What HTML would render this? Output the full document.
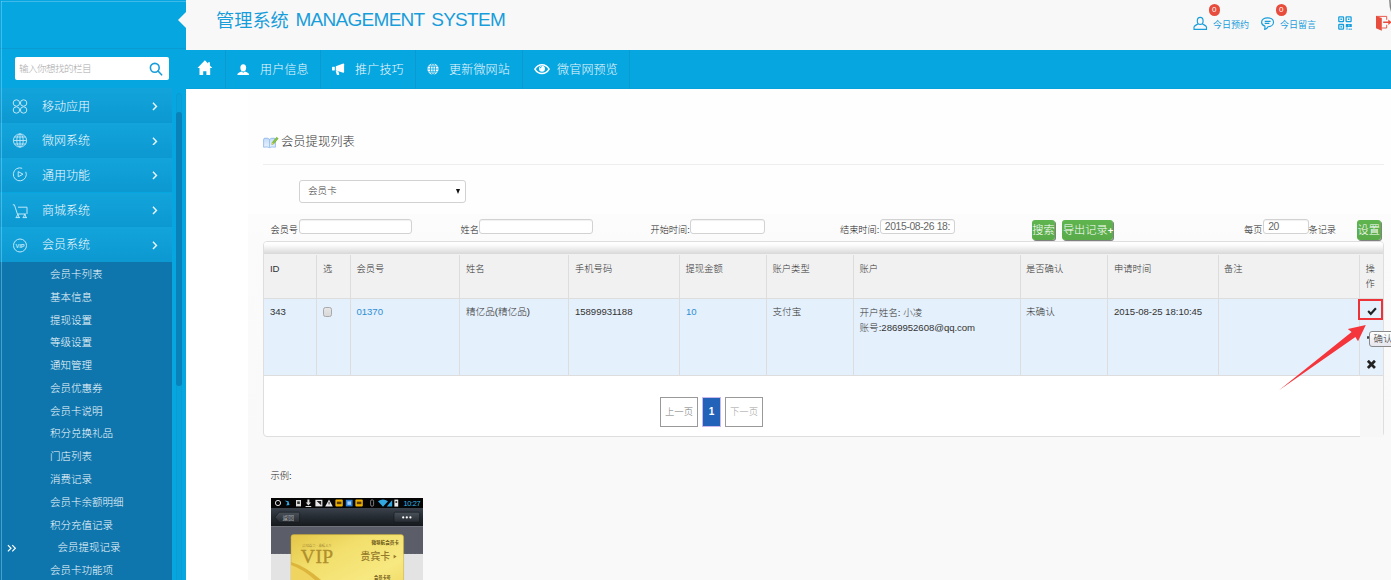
<!DOCTYPE html>
<html lang="zh-CN">
<head>
<meta charset="utf-8">
<title>管理系统 MANAGEMENT SYSTEM</title>
<style>
*{box-sizing:border-box;}
html,body{margin:0;padding:0;}
body{width:1391px;height:580px;overflow:hidden;position:relative;background:#fff;
  font-family:"Liberation Sans","Noto Sans CJK SC",sans-serif;font-size:9.6px;color:#333;font-weight:300;}
.abs{position:absolute;}
/* ---------- sidebar ---------- */
#side{position:absolute;left:0;top:0;width:186px;height:580px;background:#06a6e0;overflow:hidden;}
#side .edge{position:absolute;left:1px;top:1px;width:1px;height:579px;background:rgba(140,215,245,0.45);z-index:5;}
#side .edget{position:absolute;left:1px;top:1px;width:185px;height:1px;background:#41b9e8;}
#side .sep{position:absolute;left:0;top:48px;width:186px;height:1px;background:#0a9bd2;}
#search{position:absolute;left:15px;top:57px;width:154px;height:23px;background:#fff;border-radius:2px;}
#search span{position:absolute;left:4px;top:0;line-height:23px;font-size:9.6px;color:#a9a9a9;letter-spacing:-0.6px;}
#search svg{position:absolute;left:134px;top:5px;}
.mi{position:absolute;left:0;width:172px;height:34.7px;background:linear-gradient(#13a4dc,#0c98d0);color:#f4fbfe;font-size:12px;font-weight:300;}
.mi .t{position:absolute;left:42px;top:1.3px;line-height:34.7px;letter-spacing:0px;}
.mi svg.ic{position:absolute;left:12.2px;top:10.4px;}
.mi svg.ch{position:absolute;left:152px;top:13.6px;}
#sub{position:absolute;left:0;top:262px;width:172px;height:318px;background:#0f76ad;color:#f4fbfe;font-size:10.5px;font-weight:300;}
#sub div{position:absolute;left:50px;white-space:nowrap;line-height:14px;}
#track{position:absolute;left:176px;top:93px;width:6px;height:490px;border-radius:3px;background:#09a3dc;border:1px solid #0a9cd4;}
#thumb{position:absolute;left:176px;top:112px;width:6px;height:274px;border-radius:3px;background:#0882b9;}
/* ---------- header ---------- */
#head{position:absolute;left:186px;top:0;width:1205px;height:50px;background:#f8f8f8;}
#tri{position:absolute;left:178px;top:12.4px;width:0;height:0;border-top:8px solid transparent;border-bottom:8px solid transparent;border-right:8px solid #f8f8f8;}
#title{position:absolute;left:216px;top:6.5px;font-weight:400;font-size:18.2px;line-height:28px;color:#189ddb;white-space:nowrap;}
#title .en{position:absolute;left:79.5px;top:-0.8px;font-size:19px;letter-spacing:-0.72px;word-spacing:2.5px;}
.hl{position:absolute;font-weight:400;font-size:9px;color:#189ddb;white-space:nowrap;line-height:12px;top:19px;}
.badge{position:absolute;top:4.2px;width:11.6px;height:11.6px;border-radius:6px;background:#e74c3c;color:#fff;font-size:8px;line-height:11.6px;text-align:center;}
/* ---------- nav ---------- */
#nav{position:absolute;left:186px;top:50px;width:1205px;height:39px;background:#06a6e0;border-bottom:1px solid #05a1db;}
#nav .d{position:absolute;top:0;width:1px;height:39px;background:#0a9ad1;}
#nav .t{position:absolute;top:0.8px;line-height:39px;color:#f0f9fd;font-size:12px;letter-spacing:0.2px;white-space:nowrap;font-weight:300;}
#nav svg{position:absolute;}
/* ---------- content ---------- */
#cbg{position:absolute;left:248px;top:89px;width:1143px;height:491px;background:#fefefe;}
#cbg2{position:absolute;left:248px;top:214px;width:1143px;height:366px;background:linear-gradient(#fcfcfc 0,#fbfbfb 30px,#f9f9f9 224px,#f9f9f9 100%);}
#ptitle{position:absolute;left:281px;top:133.8px;font-size:12.3px;line-height:17px;color:#333;white-space:nowrap;}
#hr{position:absolute;left:263px;top:164px;width:1121px;height:1px;background:#eee;}
.inp{position:absolute;height:15px;top:219.3px;background:#fff;border:1px solid #d2d2d2;border-radius:3px;box-shadow:inset 0 1px 1px rgba(0,0,0,.06);}
.lab{position:absolute;top:224px;line-height:12px;font-size:9.2px;color:#222;white-space:nowrap;}
#sel{position:absolute;left:299px;top:180.2px;width:167px;height:23.2px;background:#fff;border:1px solid #d2d2d2;border-radius:3px;}
#sel span{position:absolute;left:8px;top:0;line-height:20px;font-size:9.6px;color:#444;}
#sel i{position:absolute;left:156.3px;top:8px;width:0;height:0;border-left:2.5px solid transparent;border-right:2.5px solid transparent;border-top:5px solid #111;}
.btn{position:absolute;top:220px;height:20px;border-radius:3px;background:linear-gradient(#5fb550,#59ab49);color:#fff;font-size:11.2px;line-height:21.3px;text-align:center;white-space:nowrap;box-shadow:1px 1px 0.5px #808080;}
/* table */
#panel{position:absolute;left:263px;top:241px;width:1121px;height:196px;background:#fff;border:1px solid #dedede;border-radius:4px;}
#thbar{position:absolute;left:264px;top:242px;width:1119px;height:12.4px;background:linear-gradient(#ffffff 0%,#fcfcfc 25%,#d8d8d8 100%);border-radius:3px 3px 0 0;}
#thead{position:absolute;left:264px;top:254.4px;width:1119px;height:44px;background:#f1f1f1;}
#trow{position:absolute;left:264px;top:298px;width:1119px;height:77.5px;background:#e4f0fc;border-top:1px solid #ddd;border-bottom:1px solid #ddd;}
#lastcol{position:absolute;left:1359.5px;top:375.5px;width:23px;height:61px;background:#f7f7f7;}
.vl{position:absolute;top:255px;width:1px;height:120.5px;background:#ddd;}
.th{position:absolute;top:263px;line-height:12px;font-size:9.3px;color:#333;white-space:nowrap;}
.td{position:absolute;top:306px;line-height:12px;font-size:9.6px;color:#333;white-space:nowrap;}
.lnk{color:#2e8fd6;}
.num{font-size:9.6px;letter-spacing:-0.05px;}
.pg{position:absolute;top:397px;height:30px;border:1px solid #999;background:#fff;font-size:9.4px;line-height:28px;text-align:center;color:#888;}
</style>
</head>
<body>

<!-- content backgrounds -->
<div id="cbg"></div>
<div id="cbg2"></div>


<!-- content -->
<svg class="abs" style="left:263px;top:136px" width="16" height="13" viewBox="0 0 16 13"><defs><linearGradient id="bk" x1="0" y1="0" x2="0" y2="1"><stop offset="0" stop-color="#c4dcf8"/><stop offset="1" stop-color="#eaf3fd"/></linearGradient></defs><path d="M0.600 3.600 Q0.600 2.200 2 2.200 Q5.200 1.800 6.500 3.400 Q7.800 1.800 11 2.200 Q12.400 2.200 12.400 3.600 V11.200 Q8.400 10.400 6.500 11.600 Q4.600 10.400 0.600 11.200 Z" fill="url(#bk)" stroke="#86b2e8" stroke-width="0.800"/><path d="M6.500 3.400 V11.400" stroke="#86b2e8" stroke-width="0.700"/><path d="M9.200 6.600 L13.600 1.300 L15.200 2.500 L10.800 7.800 L8.800 8.500 Z" fill="#8cc63f" stroke="#5f9a22" stroke-width="0.500"/><path d="M9.200 6.600 L10.800 7.800 L8.800 8.500 Z" fill="#f3d35b"/></svg>
<div id="ptitle">会员提现列表</div>
<div id="hr"></div>
<div id="sel"><span>会员卡</span><i></i></div>

<div class="lab" style="left:270.5px">会员号</div>
<div class="inp" style="left:298.5px;width:113.2px"></div>
<div class="lab" style="left:460.5px">姓名</div>
<div class="inp" style="left:479px;width:114px"></div>
<div class="lab" style="left:650.5px">开始时间:</div>
<div class="inp" style="left:689.5px;width:75.5px"></div>
<div class="lab" style="left:840px">结束时间:</div>
<div class="inp" style="left:879.5px;width:75.5px"><span style="position:absolute;left:4.3px;top:-0.6px;line-height:13px;font-size:10.4px;color:#666;white-space:nowrap;letter-spacing:-0.38px;font-weight:400">2015-08-26 18:</span></div>
<div class="btn" style="left:1032px;width:23px">搜索</div>
<div class="btn" style="left:1062.3px;width:51px">导出记录<span style="font-size:9.500px;font-weight:bold;letter-spacing:-0.500px">+</span></div>
<div class="lab" style="left:1244px">每页</div>
<div class="inp" style="left:1263px;width:45.5px"><span style="position:absolute;left:4.3px;top:-0.6px;line-height:13px;font-size:10.4px;color:#666;letter-spacing:-0.5px;font-weight:400">20</span></div>
<div class="lab" style="left:1308.5px">条记录</div>
<div class="btn" style="left:1357px;width:23.5px">设置</div>

<div id="panel"></div>
<div id="thbar"></div>
<div id="thead"></div>
<div id="trow"></div>
<div id="lastcol"></div>
<div class="vl" style="left:316px"></div>
<div class="vl" style="left:350px"></div>
<div class="vl" style="left:459px"></div>
<div class="vl" style="left:568px"></div>
<div class="vl" style="left:679px"></div>
<div class="vl" style="left:766px"></div>
<div class="vl" style="left:853px"></div>
<div class="vl" style="left:1020px"></div>
<div class="vl" style="left:1107px"></div>
<div class="vl" style="left:1217.5px"></div>
<div class="vl" style="left:1359px"></div>

<div class="th num" style="left:270px">ID</div>
<div class="th" style="left:323px">选</div>
<div class="th" style="left:356.5px">会员号</div>
<div class="th" style="left:466px">姓名</div>
<div class="th" style="left:575px">手机号码</div>
<div class="th" style="left:685.5px">提现金额</div>
<div class="th" style="left:772.5px">账户类型</div>
<div class="th" style="left:859.5px">账户</div>
<div class="th" style="left:1026px">是否确认</div>
<div class="th" style="left:1114px">申请时间</div>
<div class="th" style="left:1224px">备注</div>
<div class="th" style="left:1365.5px;line-height:15px;top:261.5px">操<br>作</div>

<div class="td num" style="left:270px">343</div>
<div class="abs" style="left:322.900px;top:306.900px;width:9.600px;height:9.800px;border:1px solid #a8a8a8;border-radius:2.500px;background:linear-gradient(#e6e6e6,#d8d8d8)"></div>
<div class="td lnk num" style="left:356.5px">01370</div>
<div class="td" style="left:466px">精亿品(精亿品)</div>
<div class="td num" style="left:575px">15899931188</div>
<div class="td lnk num" style="left:686px">10</div>
<div class="td" style="left:772.5px">支付宝</div>
<div class="td" style="left:859.5px;line-height:15px;top:305px">开户姓名: 小凌<br>账号:<span class="num">2869952608@qq.com</span></div>
<div class="td" style="left:1026px">未确认</div>
<div class="td num" style="left:1114px">2015-08-25 18:10:45</div>

<!-- action column -->
<div class="abs" style="left:1358px;top:299px;width:25px;height:21px;border:2px solid #ee3338"></div>
<svg class="abs" style="left:1366.5px;top:306.5px" width="10" height="9" viewBox="0 0 10 9"><path d="M0.4 4.8 L1.9 3.3 L3.8 5.2 L8.1 0.6 L9.7 2.1 L3.8 8.4 Z" fill="#222"/></svg>
<svg class="abs" style="left:1367px;top:359.5px" width="9" height="9" viewBox="0 0 9 9"><g transform="translate(4.4 4.4) rotate(45)" fill="#222"><rect x="-5" y="-1.35" width="10" height="2.7" rx="0.3"/><rect x="-1.35" y="-5" width="2.7" height="10" rx="0.3"/></g></svg>
<div class="abs" style="left:1367.3px;top:335.5px;width:2px;height:3.5px;background:#444;border-radius:1px"></div>
<div class="abs" style="left:1369px;top:330.5px;width:30px;height:16px;border:1px solid #8a8a8a;border-radius:3px;background:linear-gradient(#ffffff,#e6e6ee);font-size:9.4px;line-height:14px;padding-left:3.5px;color:#333;white-space:nowrap">确认</div>
<svg class="abs" style="left:1270px;top:320px" width="100" height="75" viewBox="1270 320 100 75"><path d="M1279 390.2 L1351.6 332 L1347.8 328.9 L1365.8 325 L1358 341.3 L1355.4 337 Z" fill="#f4363c"/></svg>

<!-- pagination -->
<div class="pg" style="left:660px;width:38px;color:#777">上一页</div>
<div class="pg" style="left:702px;width:19px;background:#2262b8;border-color:#c9b8ee;color:#fff;font-weight:bold;font-size:10px">1</div>
<div class="pg" style="left:725px;width:38px;color:#a0a0a0">下一页</div>

<div class="abs" style="left:270.5px;top:469.5px;line-height:12px;font-size:9.3px;color:#222">示例:</div>


<!-- example phone image -->
<svg class="abs" style="left:271px;top:498px" width="152" height="82" viewBox="0 0 152 82">
  <defs>
    <linearGradient id="tb" x1="0" y1="0" x2="0" y2="1"><stop offset="0" stop-color="#3a424b"/><stop offset="0.5" stop-color="#252b32"/><stop offset="1" stop-color="#15191d"/></linearGradient>
    <linearGradient id="gold" x1="0" y1="0" x2="1" y2="1"><stop offset="0" stop-color="#e3c548"/><stop offset="0.35" stop-color="#f2df6c"/><stop offset="0.7" stop-color="#f7e880"/><stop offset="1" stop-color="#efd860"/></linearGradient>
    <linearGradient id="bt" x1="0" y1="0" x2="0" y2="1"><stop offset="0" stop-color="#4a525b"/><stop offset="1" stop-color="#252a30"/></linearGradient>
  </defs>
  <rect x="0" y="0" width="152" height="10" fill="#050505"/>
  <rect x="0" y="10" width="152" height="18.5" fill="url(#tb)"/>
  <rect x="0" y="28.5" width="152" height="27.5" fill="#5b5e68"/>
  <rect x="0" y="56" width="152" height="26" fill="#e3e3e3"/>
  <path transform="translate(0,1)" d="M0 56 l2 -1.2 l2 1.2 l2 -1.2 l2 1.2 l2 -1.2 l2 1.2 l2 -1.2 l2 1.2 l2 -1.2 l2 1.2 H20 V58 H0 Z M132 56 l2 -1.2 l2 1.2 l2 -1.2 l2 1.2 l2 -1.2 l2 1.2 l2 -1.2 l2 1.2 l2 -1.2 l2 1.2 V58 H132 Z" fill="#e3e3e3"/>
  <!-- status icons -->
  <g>
    <circle cx="7" cy="5" r="2.6" fill="none" stroke="#ddd" stroke-width="1"/>
    <path d="M13.5 2.5 l3 2 l-1.2 3 l3.2 -0.6 l-1 -3.6 z" fill="#33a7e0"/>
    <rect x="25" y="2" width="5" height="6.4" fill="#ddd"/><rect x="26.2" y="3.4" width="2.6" height="2.6" fill="#333"/>
    <path d="M36.4 1.6 h2 v3 h1.6 l-2.6 2.8 l-2.6 -2.8 h1.6 z M34.6 8 h5.6 v0.9 h-5.600 z" fill="#ddd"/>
    <rect x="44.4" y="1.8" width="7" height="6.6" fill="#e8e8e8"/><path d="M45.6 3 l4.600 4.200 v-4.200 z" fill="#222"/>
    <path d="M58 1.600 l3.800 6.800 h-7.600 z" fill="#e8e8e8"/><rect x="57.600" y="3.800" width="0.9" height="2.600" fill="#222"/>
    <rect x="64.400" y="1.600" width="7.400" height="7" rx="1" fill="#f0b400"/><rect x="65.800" y="3.600" width="4.600" height="2.600" fill="#5a3c00"/>
    <rect x="74.800" y="1.800" width="6.800" height="6.600" fill="#2a7fd0"/><rect x="76.400" y="3.400" width="3.600" height="3.400" fill="#9fd0ff"/>
    <rect x="84.400" y="1.600" width="7.400" height="7" rx="1" fill="#f0b400"/><rect x="85.800" y="3.600" width="4.600" height="2.600" fill="#5a3c00"/>
    <rect x="99.600" y="1.800" width="3" height="6.400" rx="1.400" fill="none" stroke="#999" stroke-width="0.8"/>
    <path d="M107 3.200 q5 -3.400 10 0 l-5 5.600 z" fill="#33a7e0"/>
    <path d="M115.800 8.600 l5.400 -6.600 v6.600 z" fill="#33a7e0"/>
    <rect x="123.400" y="1.600" width="3.800" height="7" fill="#e8e8e8"/><circle cx="125.300" cy="4" r="1.100" fill="#333"/>
  </g>
  <text x="132.400" y="8.300" font-family="Liberation Sans, sans-serif" font-size="7.400" fill="#33b5e5" letter-spacing="-0.300">10:27</text>
  <!-- title bar buttons -->
  <path d="M4 19.200 L8.200 14.200 H27.600 a1 1 0 0 1 1 1 V23.400 a1 1 0 0 1 -1 1 H8.200 Z" fill="url(#bt)" stroke="#14171a" stroke-width="0.600"/>
  <text x="11.600" y="21.800" font-family="Liberation Sans, Noto Sans CJK SC, sans-serif" font-size="5.600" fill="#eee">返回</text>
  <rect x="123" y="14.200" width="25.600" height="10.200" rx="1.400" fill="url(#bt)" stroke="#14171a" stroke-width="0.600"/>
  <circle cx="132.200" cy="19.400" r="1.100" fill="#fff"/><circle cx="135.800" cy="19.400" r="1.100" fill="#fff"/><circle cx="139.400" cy="19.400" r="1.100" fill="#fff"/>
  <!-- card -->
  <rect x="20" y="36.600" width="112.600" height="60" rx="2.600" fill="url(#gold)" stroke="#c9a62a" stroke-width="0.500"/>
  <text x="31" y="48.800" font-family="Liberation Serif, Noto Serif CJK SC, serif" font-size="3.400" fill="#7a611a">品味尊贵 · 享醇人生</text>
  <text x="100.400" y="45.800" font-family="Liberation Sans, Noto Sans CJK SC, sans-serif" font-size="4.600" font-weight="bold" fill="#6b5516">微导航会员卡</text>
  <path d="M20 64 Q34 68 50 82 L20 82 Z" fill="#dcb53c"/><path d="M20 67 Q32 71 44 82 L20 82 Z" fill="#efd460"/><text x="29.800" y="65" font-family="Liberation Serif, serif" font-size="19.500" fill="#b08f2c" stroke="#b08f2c" stroke-width="0.300" letter-spacing="0.500">VIP</text>
  <text x="89.600" y="62.200" font-family="Liberation Sans, Noto Sans CJK SC, sans-serif" font-size="9.800" font-weight="500" fill="#94792a">贵宾卡</text>
  <path d="M122.600 56.800 l3 1.800 l-3 1.800 z" fill="#94792a"/>
  <text x="103" y="81.400" font-family="Liberation Sans, Noto Sans CJK SC, sans-serif" font-size="4.200" font-weight="bold" fill="#6b5516">会员卡号</text>
</svg>

<!-- header -->
<div id="head"></div>
<div id="title"><span class="zh">管理系统</span><span class="en">MANAGEMENT SYSTEM</span></div>


<!-- header right -->
<svg class="abs" style="left:1192px;top:16px" width="16" height="15" viewBox="0 0 16 15"><g fill="none" stroke="#189ddb" stroke-width="1.15"><ellipse cx="8.2" cy="4.9" rx="2.9" ry="3.5"/><path d="M5.9 7.7 C5.4 8.8 2.4 9.2 2 11 V13.3 H14.5 V11 C14.1 9.200 11 8.800 10.5 7.700"/></g></svg>
<div class="badge" style="left:1208.5px">0</div>
<div class="hl" style="left:1213px">今日预约</div>
<svg class="abs" style="left:1260px;top:16px" width="15" height="15" viewBox="0 0 15 15"><g fill="none" stroke="#189ddb" stroke-width="1.15"><path d="M7.6 1.800 C4.200 1.800 1.600 3.700 1.600 6.200 C1.600 8 2.900 9.400 4.900 10.100 C5.100 11.400 4.900 12.600 4.600 13.500 C6.200 13 7.400 12 8 10.700 C11.200 10.600 13.500 8.700 13.500 6.200 C13.500 3.700 11 1.800 7.600 1.800 Z" stroke-linejoin="round"/><path d="M4.700 5.400 H10.600 M4.700 7.400 H9.400" stroke-width="1.100"/></g></svg>
<div class="badge" style="left:1275.5px">0</div>
<div class="hl" style="left:1280px">今日留言</div>
<svg class="abs" style="left:1338px;top:16px" width="14" height="14" viewBox="0 0 14 14"><g fill="none" stroke="#169fdd" stroke-width="1.300"><rect x="0.800" y="0.900" width="4.700" height="4.700" rx="0.600"/><rect x="8.100" y="0.900" width="5" height="4.700" rx="0.600"/><rect x="0.800" y="8.500" width="4.700" height="4.700" rx="0.600"/></g><g fill="#169fdd"><rect x="2.400" y="2.500" width="1.500" height="1.500"/><rect x="9.900" y="2.500" width="1.500" height="1.500"/><rect x="2.400" y="10.100" width="1.500" height="1.500"/><rect x="7.800" y="7.900" width="6" height="3.200" rx="0.400"/><rect x="7.800" y="11.100" width="2.200" height="2.800" opacity="0.450"/><rect x="10.600" y="12.600" width="1.200" height="1.200"/><rect x="12.400" y="12.600" width="1.400" height="1.200"/></g><rect x="10.400" y="8.700" width="1" height="1.600" fill="#f8f8f8" opacity="0.700"/></svg>
<svg class="abs" style="left:1375px;top:15px" width="16" height="17" viewBox="0 0 16 17"><g fill="#e74c3c"><path d="M1 1 L6.8 2.9 V15.8 L1 13.3 Z"/><path d="M8.2 6.5 H13.3 V4.5 L16.6 7.25 L13.3 10 V8 H8.2 Z"/></g><path d="M1 1.4 H11.7 V4.8 M11.7 9.8 V13 H6.8" fill="none" stroke="#e74c3c" stroke-width="0.9"/></svg>
<svg class="abs" style="left:1386px;top:0" width="6" height="14" viewBox="0 0 6 14"><path d="M3.9 0 C4 5 4.6 9.5 6.4 13.2" fill="none" stroke="#858585" stroke-width="1.6"/><path d="M4.9 0 C5 4 5.4 8 6.4 11 V0 Z" fill="#bdbdbd"/></svg>

<!-- nav -->
<div id="nav">
  <div class="d" style="left:39px"></div>
  <div class="d" style="left:134px"></div>
  <div class="d" style="left:229px"></div>
  <div class="d" style="left:336px"></div>
  <div class="d" style="left:443px"></div>

  <svg style="left:0;top:0" width="70" height="39" viewBox="0 0 70 39"><path fill="#fff" d="M18.900 10.300 L22.100 13.600 V12.200 H23.900 V15.400 L26.300 17.900 H24.200 V24.900 H20.400 V21.200 H17.200 V24.900 H13.500 V17.900 H11.500 Z"/><ellipse cx="57.250" cy="17.800" rx="2.900" ry="3.600" fill="#fff"/><path fill="#fff" d="M51.300 24.900 C51.600 23 53.500 22.300 55.700 21.600 L57.250 22.700 L58.800 21.600 C61 22.300 62.900 23 63.200 24.900 Z"/></svg>
  <div class="t" style="left:74px">用户信息</div>
  <svg style="left:140px;top:0" width="30" height="39" viewBox="140 0 30 39"><g fill="#fff"><path d="M157.300 13.500 C157.800 13.500 158.100 13.800 158.100 14.300 V22 C158.100 22.500 157.800 22.800 157.300 22.700 L149.800 20.500 V16.300 Z"/><rect x="146.100" y="16.800" width="2.700" height="3.700" rx="0.600"/><path d="M149.700 20.800 L152.400 21.500 L153.200 24.300 C153.300 24.700 153.100 24.900 152.700 24.900 H151.400 C151 24.900 150.800 24.700 150.700 24.400 Z"/></g></svg>
  <div class="t" style="left:169px">推广技巧</div>
  <svg style="left:241.100px;top:13.100px" width="12" height="12" viewBox="0 0 12 12"><circle cx="6" cy="6" r="5.6" fill="#fff"/><g fill="none" stroke="#06a6e0" stroke-width="0.8"><ellipse cx="6" cy="6" rx="2.6" ry="5.6"/><path d="M6 0.4 V11.6 M0.4 6 H11.6 M1.2 3.2 H10.8 M1.2 8.8 H10.8"/></g></svg>
  <div class="t" style="left:263px">更新微网站</div>
  <svg style="left:346px;top:10px" width="20" height="18" viewBox="346 10 20 18"><path d="M348.900 19.100 C350.600 16.200 353.200 14.700 356 14.700 C358.800 14.700 361.400 16.200 363.100 19.100 C361.400 22 358.800 23.500 356 23.500 C353.200 23.500 350.600 22 348.900 19.100 Z" fill="none" stroke="#fff" stroke-width="1.500"/><circle cx="356" cy="18.700" r="3" fill="#fff"/><path d="M354.100 18.300 A1.900 1.900 0 0 1 355.800 16.700" fill="none" stroke="#06a6e0" stroke-width="0.900"/></svg>
  <div class="t" style="left:371px">微官网预览</div>
</div>

<!-- sidebar -->
<div id="side">
  <div class="sep"></div>
  <div class="edge"></div><div class="edget"></div>
  <div id="search"><span>输入你想找的栏目</span><svg width="14" height="14" viewBox="0 0 14 14"><g fill="none" stroke="#189ddb" stroke-width="1.6"><circle cx="5.8" cy="5.8" r="4.4"/><path d="M9 9 L12.6 12.8" stroke-linecap="round"/></g></svg></div>
  <div class="mi" style="top:88.4px"><svg class="ic" width="16" height="15" viewBox="0 0 16 15"><g fill="none" stroke="#bfe7f8" stroke-width="1"><circle cx="4.4" cy="4" r="3.2"/><circle cx="11.6" cy="4" r="3.2"/><circle cx="4.4" cy="11" r="3.2"/><circle cx="11.6" cy="11" r="3.2"/></g></svg><span class="t">移动应用</span><svg class="ch" width="5.6" height="8.8" viewBox="0 0 7 11"><path d="M1.2 1 L5.6 5.5 L1.2 10" fill="none" stroke="#e9f7fd" stroke-width="1.8"/></svg></div>
  <div class="mi" style="top:123.1px"><svg class="ic" width="16" height="15" viewBox="0 0 16 15"><g fill="none" stroke="#bfe7f8" stroke-width="0.9"><circle cx="8" cy="7.5" r="6.6"/><ellipse cx="8" cy="7.5" rx="3.2" ry="6.6"/><path d="M8 0.9 V14.1 M1.4 7.5 H14.6 M2.4 4 H13.6 M2.4 11 H13.6"/></g></svg><span class="t">微网系统</span><svg class="ch" width="5.6" height="8.8" viewBox="0 0 7 11"><path d="M1.2 1 L5.6 5.5 L1.2 10" fill="none" stroke="#e9f7fd" stroke-width="1.8"/></svg></div>
  <div class="mi" style="top:157.8px"><svg class="ic" style="top:9.400px" width="16" height="15" viewBox="0 0 16 15"><g fill="none" stroke="#bfe7f8" stroke-width="1"><path d="M13.800 4.800 A6.500 6.500 0 1 1 10.200 1.300"/><path d="M6.2 4.6 L11 7.2 L6.2 9.8 Z" stroke-linejoin="round"/></g></svg><span class="t">通用功能</span><svg class="ch" width="5.6" height="8.8" viewBox="0 0 7 11"><path d="M1.2 1 L5.6 5.5 L1.2 10" fill="none" stroke="#e9f7fd" stroke-width="1.8"/></svg></div>
  <div class="mi" style="top:192.5px"><svg class="ic" style="top:11.700px" width="16" height="15" viewBox="0 0 16 15"><g fill="none" stroke="#bfe7f8" stroke-width="1"><path d="M0.800 0.800 H2.400 L5.400 10 H14 M6 3.200 H15 V10"/><path d="M5.800 10 L4.400 13.600 M5.800 10 L7.200 13.600 M3.600 13.600 H8 M12.800 10 L11.400 13.600 M12.800 10 L14.200 13.600 M10.600 13.600 H15"/></g></svg><span class="t">商城系统</span><svg class="ch" width="5.6" height="8.8" viewBox="0 0 7 11"><path d="M1.2 1 L5.6 5.5 L1.2 10" fill="none" stroke="#e9f7fd" stroke-width="1.8"/></svg></div>
  <div class="mi" style="top:227.2px"><svg class="ic" style="top:11px" width="16" height="15" viewBox="0 0 16 15"><circle cx="8" cy="7.500" r="6.500" fill="none" stroke="#bfe7f8" stroke-width="1"/><text x="8" y="9.500" font-size="5.600" font-family="Liberation Sans,sans-serif" fill="#bfe7f8" text-anchor="middle" font-weight="bold">VIP</text></svg><span class="t">会员系统</span><svg class="ch" width="5.6" height="8.8" viewBox="0 0 7 11"><path d="M1.2 1 L5.6 5.5 L1.2 10" fill="none" stroke="#e9f7fd" stroke-width="1.8"/></svg></div>
  <div id="sub">
    <div style="top:5.0px">会员卡列表</div>
    <div style="top:27.8px">基本信息</div>
    <div style="top:50.5px">提现设置</div>
    <div style="top:73.3px">等级设置</div>
    <div style="top:96.1px">通知管理</div>
    <div style="top:118.8px">会员优惠券</div>
    <div style="top:141.6px">会员卡说明</div>
    <div style="top:164.4px">积分兑换礼品</div>
    <div style="top:187.2px">门店列表</div>
    <div style="top:209.9px">消费记录</div>
    <div style="top:232.7px">会员卡余额明细</div>
    <div style="top:255.5px">积分充值记录</div>
    <div style="top:278.2px;left:57.5px">会员提现记录</div>
    <svg class="abs" style="left:6.5px;top:282px" width="10" height="8.5" viewBox="0 0 11 9"><path d="M1 1 L4.4 4.5 L1 8 M5.8 1 L9.2 4.5 L5.8 8" fill="none" stroke="#fff" stroke-width="1.3"/></svg>
    <div style="top:301.0px">会员卡功能项</div>
  </div>
  <div id="track"></div>
  <div id="thumb"></div>
</div>
<div id="tri"></div>

</body>
</html>
